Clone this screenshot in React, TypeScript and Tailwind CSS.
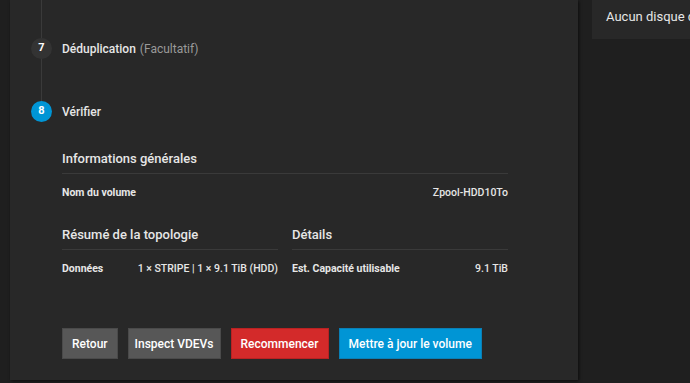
import React from "react";

const font = { fontFamily: "Roboto, 'Noto Sans', sans-serif" };

function Row({ label, value }: { label: string; value: string }) {
  return (
    <div className="flex items-center justify-between h-[38px]">
      <span className="font-bold text-[10.5px] text-[#e6e6e6]">{label}</span>
      <span className="text-[#e6e6e6] text-[10.5px] font-medium">{value}</span>
    </div>
  );
}

function Section({ title, children }: { title: string; children: React.ReactNode }) {
  return (
    <div className="flex flex-col">
      <div className="h-[30px] flex items-center text-[13px] font-medium text-[#e6e6e6] border-b border-[#3a3a3a]">
        {title}
      </div>
      {children}
    </div>
  );
}

export default function App() {
  return (
    <div style={font} className="w-[690px] h-[383px] bg-[#1f1f1f] flex overflow-hidden">
      <div className="w-[10px] shrink-0" />
      <div className="w-[568px] h-[380px] bg-[#282828] shadow-[1px_1px_3px_rgba(0,0,0,0.6)] flex flex-col shrink-0">
        {/* stepper */}
        <div className="flex flex-col pl-[21px]">
          <div className="w-[21px] flex justify-center h-[38px]">
            <div className="w-px bg-[#3a3a3a] h-full" />
          </div>
          <div className="flex items-center h-[21px]">
            <div className="w-[21px] h-[21px] rounded-full bg-[#333333] text-white text-[11px] font-bold flex items-center justify-center">7</div>
            <span className="ml-[10px] text-[12px] font-medium text-[#e6e6e6]">Déduplication</span>
            <span className="ml-[4px] text-[12px] text-[#9a9a9a]">(Facultatif)</span>
          </div>
          <div className="w-[21px] flex justify-center h-[42px]">
            <div className="w-px bg-[#3a3a3a] h-full" />
          </div>
          <div className="flex items-center h-[21px]">
            <div className="w-[21px] h-[21px] rounded-full bg-[#0095d5] text-white text-[11px] font-bold flex items-center justify-center">8</div>
            <span className="ml-[10px] text-[12px] font-medium text-[#e6e6e6]">Vérifier</span>
          </div>
        </div>
        {/* content */}
        <div className="pl-[52px] w-[498px] pt-[22px] flex flex-col">
          <Section title="Informations générales">
            <Row label="Nom du volume" value="Zpool-HDD10To" />
          </Section>
          <div className="grid grid-cols-[216px_216px] gap-x-[14px] mt-[8px]">
            <Section title="Résumé de la topologie">
              <Row label="Données" value="1 × STRIPE | 1 × 9.1 TiB (HDD)" />
            </Section>
            <Section title="Détails">
              <Row label="Est. Capacité utilisable" value="9.1 TiB" />
            </Section>
          </div>
          <div className="flex gap-[10px] mt-[40px]">
            <button className="h-[31px] px-[9px] bg-[#575757] border border-[#4a4a4a] text-white text-[12px] font-medium">Retour</button>
            <button className="h-[31px] px-[6px] bg-[#575757] border border-[#4a4a4a] text-white text-[12px] font-medium">Inspect VDEVs</button>
            <button className="h-[31px] px-[9px] bg-[#d32a2a] border border-[#b82222] text-white text-[12px] font-medium">Recommencer</button>
            <button className="h-[31px] px-[9px] bg-[#0095d5] border border-[#0a7fb5] text-white text-[12px] font-medium">Mettre à jour le volume</button>
          </div>
        </div>
      </div>
      <div className="w-[14px] shrink-0" />
      <div className="flex-1 min-w-0">
        <div className="h-[39px] bg-[#282828] pl-[14px] pt-[9px] text-[13px] leading-[15px] text-[#e6e6e6] whitespace-nowrap overflow-hidden">
          Aucun disque di
        </div>
      </div>
    </div>
  );
}
